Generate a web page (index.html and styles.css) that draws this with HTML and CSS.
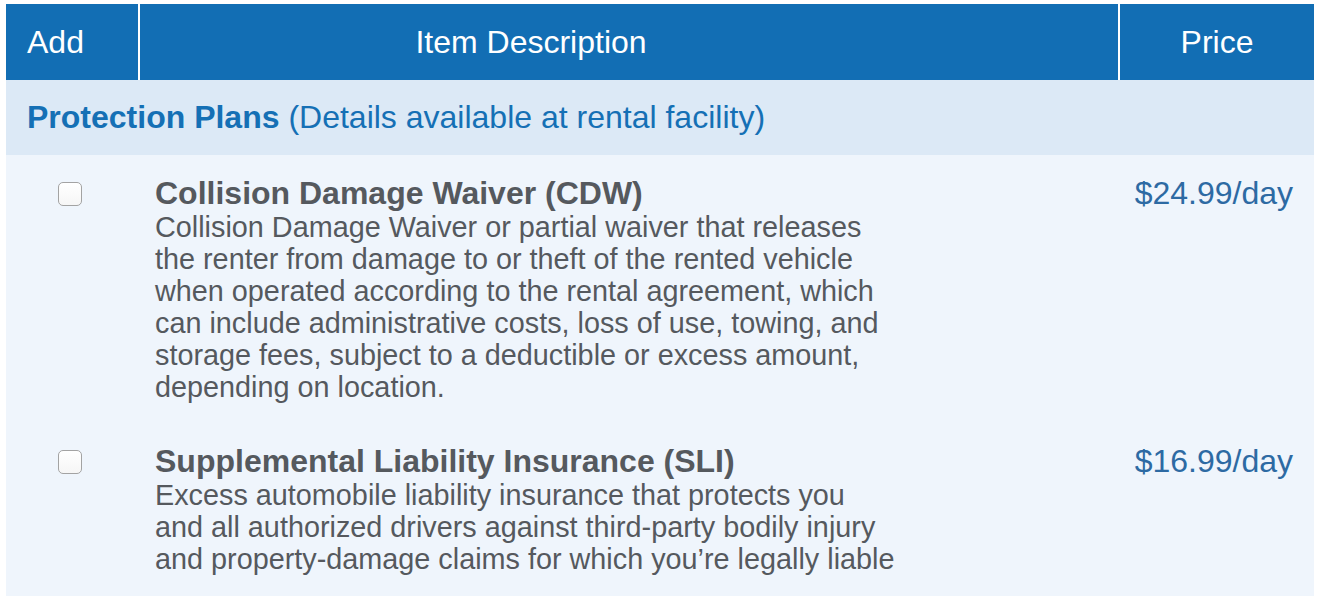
FILE: index.html
```html
<!DOCTYPE html>
<html>
<head>
<meta charset="utf-8">
<link rel="stylesheet" href="styles.css">
</head>
<body>
<div class="table">
  <div class="head">
    <div class="hcell col-add">Add</div>
    <div class="hcell col-desc">Item Description</div>
    <div class="hcell col-price">Price</div>
  </div>
  <div class="section"><strong>Protection Plans</strong> (Details available at rental facility)</div>
  <div class="item">
    <div class="col-add check-cell"><span class="checkbox"></span></div>
    <div class="col-desc body">
      <div class="title">Collision Damage Waiver (CDW)</div>
      <div class="desc">Collision Damage Waiver or partial waiver that releases the renter from damage to or theft of the rented vehicle when operated according to the rental agreement, which can include administrative costs, loss of use, towing, and storage fees, subject to a deductible or excess amount, depending on location.</div>
    </div>
    <div class="col-price price">$24.99/day</div>
  </div>
  <div class="item last">
    <div class="col-add check-cell"><span class="checkbox"></span></div>
    <div class="col-desc body">
      <div class="title">Supplemental Liability Insurance (SLI)</div>
      <div class="desc">Excess automobile liability insurance that protects you and all authorized drivers against third-party bodily injury and property-damage claims for which you’re legally liable</div>
    </div>
    <div class="col-price price">$16.99/day</div>
  </div>
</div>
</body>
</html>
```
FILE: styles.css
```css
html, body { margin: 0; padding: 0; background: #ffffff; }
body { padding: 4px 4px 0 6px; font-family: "Liberation Sans", Arial, sans-serif; }
.table { width: 1308px; }
.head { display: flex; background: #126eb4; height: 76px; }
.hcell { color: #ffffff; font-size: 32px; display: flex; align-items: center; justify-content: center; padding-top: 1px; box-sizing: border-box; }
.head .col-add { width: 134px; justify-content: flex-start; padding-left: 21px; border-right: 2px solid #ffffff; }
.head .col-desc { flex: 1; border-right: 2px solid #ffffff; padding-right: 196px; }
.head .col-price { width: 194px; }
.section { background: #dce9f6; height: 75px; display: flex; align-items: center; padding-left: 21px; font-size: 32px; color: #1570b5; white-space: pre; }
.section strong { font-weight: bold; }
.item { display: flex; background: #eff5fc; padding: 20px 0; }
.item.last { padding-bottom: 21px; }
.check-cell { width: 134px; display: flex; justify-content: flex-start; padding-left: 52px; box-sizing: border-box; padding-top: 7px; }
.checkbox { width: 24px; height: 24px; border: 1px solid #a3a3a3; border-radius: 5px; background: linear-gradient(#ffffff, #f6f6f6); box-sizing: border-box; }
.body { flex: 1; padding-left: 15px; }
.title { font-size: 32px; font-weight: bold; color: #55595e; line-height: 36px; }
.desc { font-size: 28.8px; color: #55595e; line-height: 32px; max-width: 742px; }
.price { width: 194px; text-align: right; padding-right: 21px; box-sizing: border-box; font-size: 32px; color: #2d6aa3; line-height: 36px; }
```
